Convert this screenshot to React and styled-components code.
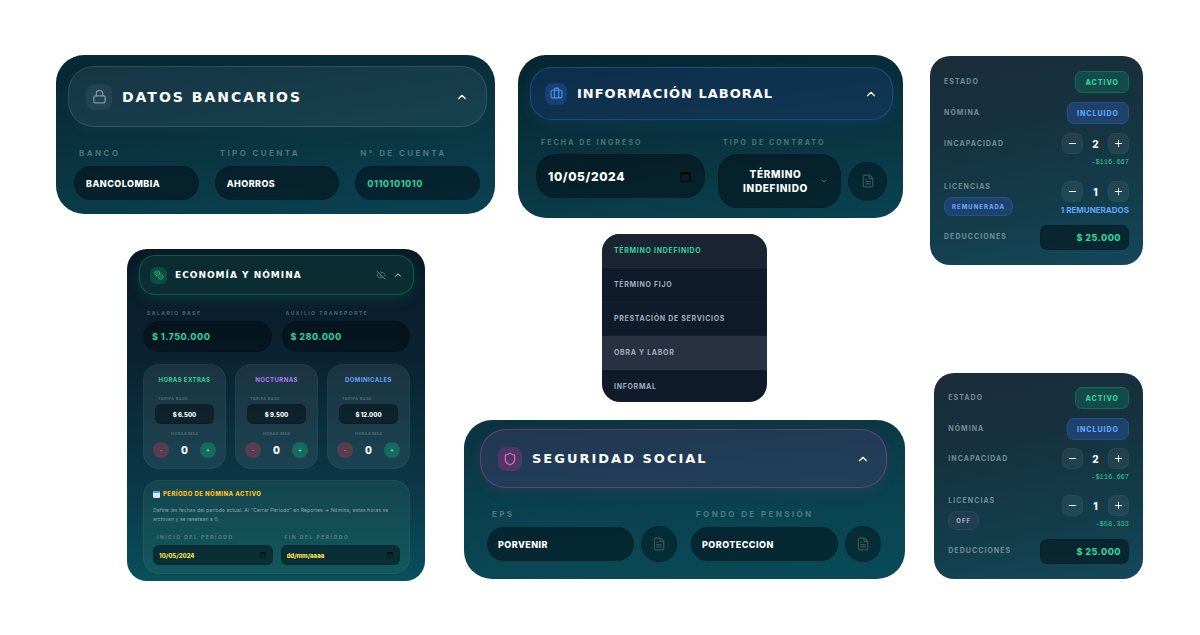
import React, { useId, useState } from 'react';
import styled, { createGlobalStyle } from 'styled-components';
import { Briefcase, ChevronDown, ChevronUp, Coins, EyeOff, FileText, Lock, Minus, Plus, Shield } from 'lucide-react';

const GlobalStyle = createGlobalStyle`
    * {
        box-sizing: border-box;
    }
    body {
        margin: 0;
        background: #fff;
        font-family: 'Inter', 'Liberation Sans', sans-serif;
        -webkit-font-smoothing: antialiased;
    }
    button, input {
        margin: 0;
        font-family: inherit;
        font-weight: 700;
    }
    button {
        cursor: pointer;
        padding: 0;
    }
    h2, h3, p, ul {
        margin: 0;
        padding: 0;
    }
`;

const Page = styled.div`
    display: grid;
    grid-template-columns: minmax(0, 849fr) minmax(0, 213fr);
    gap: 25px;
    padding: 55px 57px 56px 56px;
`;

const Main = styled.main`
    display: flex;
    flex-direction: column;
    gap: 16px;
`;

const Side = styled.aside`
    display: flex;
    flex-direction: column;
    justify-content: space-between;
    align-items: flex-end;
    padding: 1px 0 2px;
`;

const TopRow = styled.div`
    display: grid;
    grid-template-columns: minmax(0, 439fr) minmax(0, 385fr);
    align-items: start;
    gap: 23px;
    padding-right: 2px;
`;

const BottomRow = styled.div`
    display: grid;
    grid-template-columns: minmax(0, 298fr) minmax(0, 441fr);
    align-items: end;
    gap: 39px;
    padding-left: 71px;
`;

const Stack = styled.div`
    display: flex;
    flex-direction: column;
    align-items: center;
    gap: 18px;
    padding-bottom: 2px;
`;

const Card = styled.section`
    width: ${props => props.$width || '100%'};
    padding: ${props => props.$pad};
    border-radius: ${props => props.$radius || '28px'};
    background: ${props => props.$bg};
`;

const tones = {
    slate: { bg: 'rgba(148, 163, 200, 0.1)', border: 'rgba(255, 255, 255, 0.12)', tile: 'rgba(148, 163, 184, 0.1)', icon: '#8295a3', glow: 'rgba(148, 163, 184, 0.04)' },
    blue: { bg: 'rgba(30, 64, 130, 0.3)', border: 'rgba(59, 130, 246, 0.32)', tile: 'rgba(37, 99, 200, 0.34)', icon: '#5592e0', glow: 'rgba(59, 130, 246, 0.1)' },
    green: { bg: 'rgba(16, 120, 90, 0.2)', border: 'rgba(16, 185, 129, 0.34)', tile: 'rgba(16, 185, 129, 0.22)', icon: '#2bc48d', glow: 'rgba(16, 185, 129, 0.16)' },
    pink: { bg: 'rgba(75, 60, 110, 0.36)', border: 'rgba(190, 70, 150, 0.46)', tile: 'rgba(170, 50, 140, 0.34)', icon: '#f067b4', glow: 'rgba(190, 70, 150, 0.1)' },
};

const Header = styled.header`
    display: flex;
    align-items: center;
    height: ${props => props.$height};
    padding: 0 ${props => props.$right || '17px'} 0 ${props => props.$left};
    border: 1px solid ${props => tones[props.$tone].border};
    border-radius: ${props => props.$radius};
    background: ${props => tones[props.$tone].bg};
    box-shadow: 0 4px 14px ${props => tones[props.$tone].glow};
`;

const Tile = styled.span`
    flex: none;
    display: flex;
    align-items: center;
    justify-content: center;
    width: ${props => props.$size};
    height: ${props => props.$size};
    border-radius: ${props => props.$radius || '8px'};
    background: ${props => tones[props.$tone].tile};
    color: ${props => tones[props.$tone].icon};
`;

const Title = styled.h2`
    flex: 1;
    min-width: 0;
    padding-left: ${props => props.$gap || '10px'};
    font-family: 'DejaVu Sans', sans-serif;
    font-weight: 700;
    font-size: ${props => props.$size};
    letter-spacing: ${props => props.$spacing || '2px'};
    line-height: 20px;
    white-space: nowrap;
    color: #fff;
`;

const HeaderActions = styled.div`
    display: flex;
    align-items: center;
    gap: 7px;
`;

const IconButton = styled.button`
    display: flex;
    border: 0;
    background: none;
    color: ${props => props.$color || '#fff'};
`;

const Fields = styled.div`
    display: grid;
    grid-template-columns: ${props => props.$columns};
    align-items: start;
    gap: ${props => props.$gap};
    padding: ${props => props.$pad};
`;

const FieldBox = styled.div`
    min-width: 0;
    display: flex;
    flex-direction: column;
`;

const Label = styled.label`
    display: block;
    padding-left: ${props => props.$indent || '5px'};
    margin-bottom: ${props => props.$below || '7px'};
    font-size: ${props => props.$size || '8px'};
    font-weight: 700;
    line-height: ${props => props.$line || '12px'};
    letter-spacing: ${props => props.$spacing || '0.3em'};
    text-align: ${props => props.$align || 'left'};
    white-space: nowrap;
    color: ${props => props.$color || 'rgba(148, 178, 190, 0.5)'};
`;

const HoursLabel = styled(Label)`
    margin-top: 7px;
`;

const Input = styled.input`
    display: block;
    width: 100%;
    min-width: 0;
    height: ${props => props.$height};
    padding: 0 ${props => props.$pad || '11px'};
    border: 1px solid rgba(0, 0, 0, 0.08);
    border-radius: ${props => props.$radius || '20px'};
    background: rgba(0, 10, 16, 0.5);
    font-size: ${props => props.$size || '9px'};
    font-weight: 800;
    letter-spacing: ${props => props.$spacing || '0.05em'};
    text-align: ${props => props.$align || 'left'};
    color: ${props => props.$color || '#fff'};
    outline: none;
    &::placeholder {
        color: inherit;
        opacity: 1;
    }
`;

const DateWrap = styled.div`
    position: relative;
    display: flex;
    align-items: center;
    svg {
        position: absolute;
        right: ${props => props.$right};
    }
`;

const Inline = styled.div`
    display: flex;
    align-items: center;
    gap: 7px;
`;

const Contract = styled.button`
    flex: 1;
    min-width: 0;
    display: flex;
    align-items: center;
    height: 54px;
    padding: 0 12px;
    border: 1px solid rgba(0, 0, 0, 0.08);
    border-radius: 20px;
    background: rgba(0, 10, 16, 0.5);
    font-size: 10px;
    font-weight: 800;
    line-height: 14px;
    letter-spacing: 0.07em;
    color: #fff;
    span {
        flex: 1;
    }
`;

const DocButton = styled.button`
    flex: none;
    display: flex;
    align-items: center;
    justify-content: center;
    width: ${props => props.$size};
    height: ${props => props.$size};
    border: 1px solid rgba(0, 0, 0, 0.1);
    border-radius: 50%;
    background: rgba(0, 10, 16, 0.42);
    color: #38545a;
`;

const Menu = styled.ul`
    width: 165px;
    overflow: hidden;
    list-style: none;
    border-radius: 18px;
    background: #0f1a2b;
`;

const Option = styled.li`
    display: flex;
    align-items: center;
    height: 34px;
    padding: 0 12px;
    border-bottom: 1px solid rgba(255, 255, 255, 0.02);
    background: ${props => props.$bg || 'none'};
    font-size: 7px;
    font-weight: 700;
    letter-spacing: 0.1em;
    color: ${props => props.$active ? '#34d399' : '#a3adbd'};
    cursor: pointer;
    &:last-child {
        height: 32px;
        border: 0;
    }
`;

const HourCards = styled.div`
    display: grid;
    grid-template-columns: repeat(3, minmax(0, 1fr));
    gap: 9px;
    margin: 12px 4px 11px;
`;

const HourCard = styled.div`
    display: flex;
    flex-direction: column;
    height: 105px;
    padding: 10px 11px;
    border: 1px solid rgba(255, 255, 255, 0.04);
    border-radius: 16px;
    background: rgba(255, 255, 255, 0.07);
`;

const HourTitle = styled.h3`
    margin-bottom: 11px;
    font-size: 6px;
    font-weight: 700;
    line-height: 10px;
    letter-spacing: 0.07em;
    text-align: center;
    white-space: nowrap;
    color: ${props => props.$color};
`;

const Counter = styled.div`
    display: flex;
    align-items: center;
    justify-content: space-between;
    margin: 0 -2px;
    font-size: 10px;
    font-weight: 800;
    color: #fff;
`;

const RoundButton = styled.button`
    width: 16px;
    height: 16px;
    border: 0;
    border-radius: 50%;
    background: ${props => props.$bg};
    font-size: 6px;
    line-height: 16px;
    color: ${props => props.$color};
`;

const Period = styled.div`
    margin: 0 4px;
    padding: 8px 9px;
    border: 1px solid rgba(234, 179, 8, 0.08);
    border-radius: 16px;
    background: rgba(60, 130, 115, 0.2);
`;

const PeriodTitle = styled.h3`
    display: flex;
    align-items: center;
    gap: 3px;
    font-size: 6px;
    font-weight: 800;
    line-height: 10px;
    letter-spacing: 0.07em;
    color: #fbbf24;
`;

const PeriodText = styled.p`
    margin: 7px 0 9px;
    padding-right: 6px;
    font-size: 5px;
    line-height: 9px;
    letter-spacing: 0.02em;
    color: rgba(170, 195, 205, 0.8);
`;

const Line = styled.div`
    display: flex;
    align-items: flex-start;
    justify-content: space-between;
    min-height: ${props => props.$height};
`;

const LineLabel = styled.span`
    display: block;
    padding-top: ${props => props.$top || '0'};
    margin-bottom: ${props => props.$below || '0'};
    font-size: 7px;
    font-weight: 700;
    line-height: ${props => props.$line || '22px'};
    letter-spacing: 0.15em;
    color: #738c96;
`;

const Pill = styled.button`
    display: block;
    height: ${props => props.$height || '22px'};
    padding: 0 ${props => props.$pad || '9px'};
    border: 1px solid ${props => props.$border};
    border-radius: ${props => props.$radius || '7px'};
    background: ${props => props.$bg};
    font-size: ${props => props.$size || '7px'};
    font-weight: 800;
    letter-spacing: 1px;
    color: ${props => props.$color};
`;

const StepperBox = styled.div`
    display: flex;
    flex-direction: column;
    align-items: flex-end;
`;

const StepperRow = styled.div`
    display: flex;
    align-items: center;
    font-size: 10px;
    font-weight: 800;
    color: #fff;
    output {
        width: 25px;
        text-align: center;
    }
`;

const StepButton = styled.button`
    display: flex;
    align-items: center;
    justify-content: center;
    width: 21px;
    height: 21px;
    border: 1px solid rgba(255, 255, 255, 0.03);
    border-radius: 7px;
    background: rgba(255, 255, 255, 0.06);
    color: #fff;
`;

const Note = styled.span`
    font-family: ${props => props.$mono ? "'Liberation Mono', monospace" : 'inherit'};
    font-size: ${props => props.$mono ? '7px' : '8px'};
    font-weight: ${props => props.$mono ? '400' : '700'};
    line-height: 16px;
    color: ${props => props.$mono ? '#34c79a' : '#60a5fa'};
`;

const AmountBox = styled.div`
    width: 89px;
`;

const CalendarGlyph = ({ size }) => (
    <svg width={size} height={size} viewBox='0 0 10 10' fill='none' stroke='#000' strokeWidth='1'>
        <path d='M1 1.5h8v8H1z' />
        <path d='M1 2h8' strokeWidth='2' />
    </svg>
);

function SectionHeader({ icon: Icon, title, tone, height, left, right, radius, tile, iconSize, size, spacing, gap, tileRadius, chevron = 14, children }) {
    return (
        <Header $tone={tone} $height={height} $left={left} $right={right} $radius={radius}>
            <Tile $tone={tone} $size={tile} $radius={tileRadius}>
                <Icon size={iconSize} strokeWidth={2} />
            </Tile>
            <Title $size={size} $spacing={spacing} $gap={gap}>{title}</Title>
            <HeaderActions>
                {children}
                <IconButton aria-label={`Contraer ${title}`}>
                    <ChevronUp size={chevron} strokeWidth={2} />
                </IconButton>
            </HeaderActions>
        </Header>
    );
}

function Field({ label, value, labelProps, children, ...inputProps }) {
    const id = useId();
    return (
        <FieldBox>
            <Label htmlFor={id} {...labelProps}>{label}</Label>
            {children ? children(id) : <Input id={id} defaultValue={value} {...inputProps} />}
        </FieldBox>
    );
}

function DateField({ label, value, labelProps, icon, right, ...inputProps }) {
    return (
        <Field label={label} labelProps={labelProps}>
            {(id) => (
                <DateWrap $right={right}>
                    <Input id={id} defaultValue={value} {...inputProps} />
                    <CalendarGlyph size={icon} />
                </DateWrap>
            )}
        </Field>
    );
}

function Stepper({ name, initial, note, mono }) {
    const [count, setCount] = useState(initial);
    return (
        <StepperBox>
            <StepperRow>
                <StepButton aria-label={`Restar ${name}`} onClick={() => setCount(Math.max(0, count - 1))}>
                    <Minus size={11} strokeWidth={2} />
                </StepButton>
                <output>{count}</output>
                <StepButton aria-label={`Sumar ${name}`} onClick={() => setCount(count + 1)}>
                    <Plus size={11} strokeWidth={2} />
                </StepButton>
            </StepperRow>
            <Note $mono={mono}>{note}</Note>
        </StepperBox>
    );
}

function Hours({ title, color, rate }) {
    const [hours, setHours] = useState(0);
    const small = { $size: '4px', $line: '6px', $spacing: '0.1em', $color: 'rgba(148, 178, 190, 0.42)' };
    return (
        <HourCard>
            <HourTitle $color={color}>{title}</HourTitle>
            <Field
                label='TARIFA BASE'
                value={rate}
                labelProps={{ ...small, $indent: '3px', $below: '2px' }}
                $height='20px' $radius='6px' $size='6px' $align='center' $pad='4px' $spacing='0'
            />
            <HoursLabel as='span' {...small} $indent='0' $align='center' $below='5px'>HORAS MES</HoursLabel>
            <Counter>
                <RoundButton aria-label={`Restar ${title}`} $bg='rgba(200, 60, 80, 0.35)' $color='#f0606c' onClick={() => setHours(Math.max(0, hours - 1))}>-</RoundButton>
                {hours}
                <RoundButton aria-label={`Sumar ${title}`} $bg='rgba(16, 185, 129, 0.35)' $color='#4fe0ac' onClick={() => setHours(hours + 1)}>+</RoundButton>
            </Counter>
        </HourCard>
    );
}

const green = { $bg: '#134a4b', $border: '#17695c', $color: '#34d399' };
const blue = { $bg: '#1e426b', $border: '#25528c', $color: '#60a5fa' };
const gray = { $bg: '#213f50', $border: '#2a4659', $color: '#9db0bd' };

function Summary({ compact, license, licensePill, licenseNote, mono }) {
    const id = useId();
    return (
        <Card
            $width={compact ? '98%' : '100%'}
            $radius='20px'
            $pad={compact ? '14px 14px 15px' : '15px 14px'}
            $bg='linear-gradient(168deg, #1a2c3a 0%, #16323f 35%, #133e4d 75%, #13495a 100%)'
        >
            <Line $height='31px'>
                <LineLabel>ESTADO</LineLabel>
                <Pill {...green}>ACTIVO</Pill>
            </Line>
            <Line $height={compact ? '30px' : '31px'}>
                <LineLabel>NÓMINA</LineLabel>
                <Pill {...blue}>INCLUIDO</Pill>
            </Line>
            <Line $height={compact ? '47px' : '48px'}>
                <LineLabel>INCAPACIDAD</LineLabel>
                <Stepper name='incapacidad' initial={2} note='-$116.667' mono />
            </Line>
            <Line $height='44px'>
                <div>
                    <LineLabel $line='11px' $below='5px'>LICENCIAS</LineLabel>
                    <Pill {...licensePill} $height='19px' $pad='7px' $size='6px' $radius='8px'>{license}</Pill>
                </div>
                <Stepper name='licencias' initial={1} note={licenseNote} mono={mono} />
            </Line>
            <Line>
                <LineLabel as='label' htmlFor={id} $top='1px'>DEDUCCIONES</LineLabel>
                <AmountBox>
                    <Input id={id} defaultValue='$ 25.000' $height='25px' $radius='7px' $align='right' $pad='7px' $color='#34d399' />
                </AmountBox>
            </Line>
        </Card>
    );
}

const options = ['TÉRMINO INDEFINIDO', 'TÉRMINO FIJO', 'PRESTACIÓN DE SERVICIOS', 'OBRA Y LABOR', 'INFORMAL'];

function App() {

    const [contract, setContract] = useState(options[0]);

    const smallLabel = { $size: '5px', $indent: '4px', $line: '8px', $below: '4px' };
    const periodDate = { icon: '6', right: '7px', $height: '20px', $radius: '6px', $pad: '5px', $size: '6px', $spacing: '0', $color: '#fde047' };

    return (
        <>
            <GlobalStyle />
            <Page>
                <Main>
                    <TopRow>
                        <Card $pad='11px 8px 14px 12px' $bg='linear-gradient(172deg, #072733 0%, #0a3440 50%, #0a4253 100%)'>
                            <SectionHeader icon={Lock} title='DATOS BANCARIOS' tone='slate' height='61px' left='17px' radius='26px' tile='26px' iconSize={15} size='14px' />
                            <Fields $columns='repeat(3, minmax(0, 1fr))' $gap='16px' $pad='20px 7px 0 6px'>
                                <Field label='BANCO' value='BANCOLOMBIA' $height='34px' />
                                <Field label='TIPO CUENTA' value='AHORROS' $height='34px' />
                                <Field label='N° DE CUENTA' value='0110101010' $height='34px' $color='#34c79a' />
                            </Fields>
                        </Card>
                        <Card $pad='12px 10px 10px 12px' $bg='linear-gradient(172deg, #072530 0%, #0a3440 55%, #094352 100%)'>
                            <SectionHeader icon={Briefcase} title='INFORMACIÓN LABORAL' tone='blue' height='53px' left='14px' right='14px' radius='22px' tile='22px' iconSize={13} size='13px' spacing='1px' />
                            <Fields $columns='minmax(0, 1fr) minmax(0, 1fr)' $gap='13px' $pad='17px 6px 0'>
                                <DateField label='FECHA DE INGRESO' value='10/05/2024' labelProps={{ $size: '7px', $below: '5px' }} icon='11' right='14px' $height='44px' $size='12px' />
                                <Field label='TIPO DE CONTRATO' labelProps={{ $size: '7px', $below: '5px' }}>
                                    {(id) => (
                                        <Inline>
                                            <Contract id={id} aria-haspopup='listbox'>
                                                <span>{contract}</span>
                                                <ChevronDown size={8} color='#7d9298' />
                                            </Contract>
                                            <DocButton $size='39px' aria-label='Ver contrato'>
                                                <FileText size={14} strokeWidth={2} />
                                            </DocButton>
                                        </Inline>
                                    )}
                                </Field>
                            </Fields>
                        </Card>
                    </TopRow>
                    <BottomRow>
                        <Card $radius='20px' $pad='6px 11px 7px 12px' $bg='linear-gradient(180deg, #0a1826 0%, #0a2433 35%, #0a3a4a 75%, #08505c 100%)'>
                            <SectionHeader icon={Coins} title='ECONOMÍA Y NÓMINA' tone='green' height='40px' left='10px' right='10px' radius='16px' tile='17px' tileRadius='6px' iconSize={10} size='9px' spacing='1px' gap='8px' chevron={10}>
                                <IconButton $color='#5f7a80' aria-label='Ocultar valores'>
                                    <EyeOff size={10} />
                                </IconButton>
                            </SectionHeader>
                            <Fields $columns='minmax(0, 1fr) minmax(0, 1fr)' $gap='10px' $pad='14px 4px 0'>
                                <Field label='SALARIO BASE' value='$ 1.750.000' labelProps={smallLabel} $height='31px' $pad='8px' $color='#34c79a' />
                                <Field label='AUXILIO TRANSPORTE' value='$ 280.000' labelProps={smallLabel} $height='31px' $pad='8px' $color='#34c79a' />
                            </Fields>
                            <HourCards>
                                <Hours title='HORAS EXTRAS' color='#34d399' rate='$ 6.500' />
                                <Hours title='NOCTURNAS' color='#b07df5' rate='$ 9.500' />
                                <Hours title='DOMINICALES' color='#60a5fa' rate='$ 12.000' />
                            </HourCards>
                            <Period>
                                <PeriodTitle>
                                    <svg width='7' height='7' viewBox='0 0 7 7'>
                                        <rect width='7' height='7' rx='1' fill='#dfe3f5' />
                                        <rect width='7' height='2' rx='1' fill='#4f9be0' />
                                    </svg>
                                    PERÍODO DE NÓMINA ACTIVO
                                </PeriodTitle>
                                <PeriodText>
                                    Define las fechas del período actual. Al "Cerrar Período" en Reportes → Nómina, estas horas se archivan y se resetean a 0.
                                </PeriodText>
                                <Fields $columns='minmax(0, 1fr) minmax(0, 1fr)' $gap='8px' $pad='0'>
                                    <DateField label='INICIO DEL PERÍODO' value='10/05/2024' labelProps={smallLabel} {...periodDate} />
                                    <DateField label='FIN DEL PERÍODO' placeholder='dd/mm/aaaa' labelProps={smallLabel} {...periodDate} />
                                </Fields>
                            </Period>
                        </Card>
                        <Stack>
                            <Menu role='listbox' aria-label='Tipo de contrato'>
                                {
                                    options.map((option, i) => (
                                        <Option
                                            key={option}
                                            role='option'
                                            aria-selected={option === contract}
                                            $active={option === contract}
                                            $bg={option === contract ? '#1b2432' : i === 3 ? '#283142' : ''}
                                            onClick={() => setContract(option)}
                                        >
                                            {option}
                                        </Option>
                                    ))
                                }
                            </Menu>
                            <Card $pad='9px 18px 17px 16px' $bg='linear-gradient(175deg, #0a3340 0%, #0a414e 50%, #094a58 100%)'>
                                <SectionHeader icon={Shield} title='SEGURIDAD SOCIAL' tone='pink' height='59px' left='17px' right='16px' radius='26px' tile='24px' iconSize={14} size='13px' />
                                <Fields $columns='minmax(0, 1fr) minmax(0, 1fr)' $gap='14px' $pad='20px 6px 0 7px'>
                                    {
                                        [['EPS', 'PORVENIR'], ['FONDO DE PENSIÓN', 'POROTECCION']].map(([label, value]) => (
                                            <Field key={label} label={label} labelProps={{ $below: '6px' }}>
                                                {(id) => (
                                                    <Inline>
                                                        <Input id={id} defaultValue={value} $height='34px' $pad='10px' />
                                                        <DocButton $size='36px' aria-label={`Ver documento ${label}`}>
                                                            <FileText size={14} strokeWidth={2} />
                                                        </DocButton>
                                                    </Inline>
                                                )}
                                            </Field>
                                        ))
                                    }
                                </Fields>
                            </Card>
                        </Stack>
                    </BottomRow>
                </Main>
                <Side>
                    <Summary license='REMUNERADA' licensePill={blue} licenseNote='1 REMUNERADOS' />
                    <Summary compact license='OFF' licensePill={gray} licenseNote='-$58.333' mono />
                </Side>
            </Page>
        </>
    );
}

export default App;
